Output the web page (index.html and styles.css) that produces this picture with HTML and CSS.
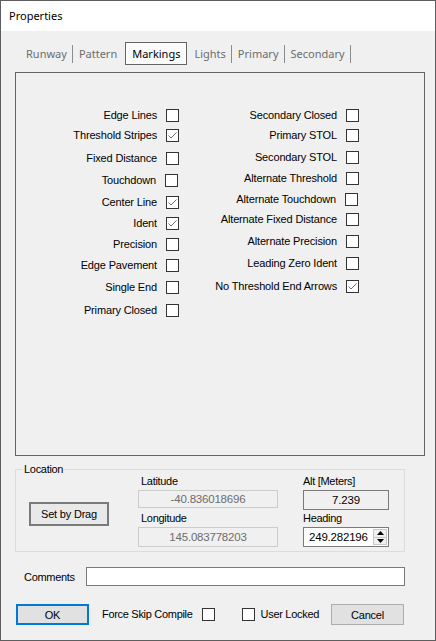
FILE: index.html
```html
<!DOCTYPE html>
<html>
<head>
<meta charset="utf-8">
<link rel="stylesheet" href="styles.css">
</head>
<body>
<div class="window">
  <div class="titlebar">Properties</div>
  <div class="content">
    <div class="tabs">
      <span class="tab">Runway</span><span class="sep"></span>
      <span class="tab">Pattern</span>
      <span class="tab selected">Markings</span>
      <span class="tab">Lights</span><span class="sep"></span>
      <span class="tab">Primary</span><span class="sep"></span>
      <span class="tab">Secondary</span><span class="sep"></span>
    </div>

    <div class="panel">
      <div class="col col-left">
        <div class="row"><span class="lbl">Edge Lines</span><span class="cb"></span></div>
        <div class="row"><span class="lbl">Threshold Stripes</span><span class="cb"><svg viewBox="0 0 11 11" width="11" height="11"><polyline points="1.5,5.5 4,8 9.5,2.5" fill="none" stroke="#6f6f6f" stroke-width="1"/></svg></span></div>
        <div class="row"><span class="lbl">Fixed Distance</span><span class="cb"></span></div>
        <div class="row nudge"><span class="lbl">Touchdown</span><span class="cb"></span></div>
        <div class="row"><span class="lbl">Center Line</span><span class="cb"><svg viewBox="0 0 11 11" width="11" height="11"><polyline points="1.5,5.5 4,8 9.5,2.5" fill="none" stroke="#6f6f6f" stroke-width="1"/></svg></span></div>
        <div class="row"><span class="lbl">Ident</span><span class="cb"><svg viewBox="0 0 11 11" width="11" height="11"><polyline points="1.5,5.5 4,8 9.5,2.5" fill="none" stroke="#6f6f6f" stroke-width="1"/></svg></span></div>
        <div class="row"><span class="lbl">Precision</span><span class="cb"></span></div>
        <div class="row"><span class="lbl">Edge Pavement</span><span class="cb"></span></div>
        <div class="row"><span class="lbl">Single End</span><span class="cb"></span></div>
        <div class="row"><span class="lbl">Primary Closed</span><span class="cb"></span></div>
      </div>
      <div class="col col-right">
        <div class="row"><span class="lbl">Secondary Closed</span><span class="cb"></span></div>
        <div class="row"><span class="lbl">Primary STOL</span><span class="cb"></span></div>
        <div class="row"><span class="lbl">Secondary STOL</span><span class="cb"></span></div>
        <div class="row"><span class="lbl">Alternate Threshold</span><span class="cb"></span></div>
        <div class="row nudge"><span class="lbl">Alternate Touchdown</span><span class="cb"></span></div>
        <div class="row"><span class="lbl">Alternate Fixed Distance</span><span class="cb"></span></div>
        <div class="row"><span class="lbl">Alternate Precision</span><span class="cb"></span></div>
        <div class="row"><span class="lbl">Leading Zero Ident</span><span class="cb"></span></div>
        <div class="row"><span class="lbl">No Threshold End Arrows</span><span class="cb"><svg viewBox="0 0 11 11" width="11" height="11"><polyline points="1.5,5.5 4,8 9.5,2.5" fill="none" stroke="#6f6f6f" stroke-width="1"/></svg></span></div>
      </div>
    </div>

    <div class="location">
      <span class="loc-title">Location</span>
      <div class="btn drag-btn">Set by Drag</div>
      <div class="field-col latlon">
        <span class="flabel">Latitude</span>
        <div class="input disabled short">-40.836018696</div>
        <span class="flabel second">Longitude</span>
        <div class="input disabled">145.083778203</div>
      </div>
      <div class="field-col altcol">
        <span class="flabel">Alt [Meters]</span>
        <div class="input readonly">7.239</div>
        <span class="flabel second-b">Heading</span>
        <div class="input spin">
          <span class="spin-val">249.282196</span>
          <span class="spinner">
            <span class="spin-btn"><svg viewBox="0 0 7 4" width="7" height="4"><polygon points="0,4 7,4 3.5,0" fill="#000"/></svg></span>
            <span class="spin-btn"><svg viewBox="0 0 7 4" width="7" height="4"><polygon points="0,0 7,0 3.5,4" fill="#000"/></svg></span>
          </span>
        </div>
      </div>
    </div>

    <div class="comments-row">
      <span class="clabel">Comments</span>
      <div class="input comments"></div>
    </div>

    <div class="buttons-row">
      <div class="btn ok">OK</div>
      <span class="blabel force">Force Skip Compile</span>
      <span class="cb"></span>
      <span class="cb locked"></span>
      <span class="blabel user">User Locked</span>
      <div class="btn cancel">Cancel</div>
    </div>
  </div>
</div>
</body>
</html>
```

FILE: styles.css
```css
html, body {
  margin: 0;
  padding: 0;
  background: #f0f0f0;
}

.window {
  width: 436px;
  height: 641px;
  box-sizing: border-box;
  border: 1px solid #5e5e5e;
  background: #f0f0f0;
  font-family: "Liberation Sans", Arial, sans-serif;
  font-size: 11px;
  color: #000;
  overflow: hidden;
}

.titlebar {
  height: 30px;
  background: #fff;
  font-family: "Noto Sans", "Open Sans", sans-serif;
  font-size: 11px;
  line-height: 30px;
  padding-left: 8px;
  color: #000;
}

.content {
  padding-left: 14px;
}

/* tabs */
.tabs {
  display: flex;
  align-items: center;
  height: 23px;
  margin-top: 11px;
  padding-left: 5px;
  font-family: "Noto Sans", "Open Sans", sans-serif;
  font-size: 11px;
  color: #6d6d6d;
}

.tab {
  padding: 0 5px 0 6px;
  line-height: 21px;
}

.tab.selected {
  color: #000;
  background: #fbfbfb;
  border: 1px solid #646464;
  padding: 0 6px;
  margin: 0 1px 0 3px;
}

.sep {
  width: 1px;
  height: 18px;
  background: #8c8c8c;
}

/* main panel */
.panel {
  margin-top: 7px;
  width: 410px;
  height: 384px;
  box-sizing: border-box;
  border: 1px solid #646464;
  display: flex;
  padding-top: 36px;
}

.col {
  display: grid;
  align-content: start;
}

.col-left {
  width: 163px;
  grid-template-rows: 20px 23px 22px 22px 21px 21px 21px 22px 23px 13px;
}

.col-right {
  width: 180px;
  grid-template-rows: 20px 22px 21px 21px 20px 22px 22px 23px 13px;
}

.row {
  display: flex;
  justify-content: flex-end;
  align-items: center;
  gap: 9px;
  height: 13px;
}

.row.nudge {
  margin-right: 1px;
}

.lbl, .flabel, .clabel, .blabel, .loc-title {
  font-family: "Liberation Sans", Arial, sans-serif;
  font-size: 11px;
  letter-spacing: -0.3px;
  line-height: 13px;
  white-space: nowrap;
}

.lbl {
  letter-spacing: -0.15px;
}

.cb {
  width: 13px;
  height: 13px;
  box-sizing: border-box;
  border: 1px solid #333;
  background: #fff;
  display: flex;
  align-items: center;
  justify-content: center;
  flex: none;
}

.cb svg {
  display: block;
}

/* location group */
.location {
  position: relative;
  margin-top: 13px;
  width: 390px;
  height: 83px;
  box-sizing: border-box;
  border: 1px solid #dcdcdc;
  display: flex;
  align-items: flex-start;
  padding-left: 13px;
}

.loc-title {
  position: absolute;
  left: 7px;
  top: -7px;
  padding: 0 1px;
  background: #f0f0f0;
}

.btn {
  box-sizing: border-box;
  display: flex;
  align-items: center;
  justify-content: center;
  font-family: "Liberation Sans", Arial, sans-serif;
  font-size: 11px;
  letter-spacing: -0.2px;
  background: #e1e1e1;
}

.drag-btn {
  width: 80px;
  height: 24px;
  margin-top: 32px;
  border: 2px solid #7a7a7a;
  background: #e9e9e9;
}

.field-col {
  display: flex;
  flex-direction: column;
  padding-top: 5px;
}

.latlon {
  width: 140px;
  margin-left: 29px;
}

.altcol {
  width: 86px;
  margin-left: 25px;
}

.flabel {
  padding-left: 3px;
}

.altcol .flabel {
  padding-left: 0;
}

.input {
  box-sizing: border-box;
  height: 20px;
  display: flex;
  align-items: center;
  justify-content: center;
  font-family: "Liberation Sans", Arial, sans-serif;
  font-size: 11.5px;
  letter-spacing: -0.2px;
}

.latlon .input {
  margin-top: 2px;
}

.input.short {
  height: 18px;
}

.flabel.second {
  margin-top: 4px;
}

.altcol .input {
  margin-top: 2px;
}

.flabel.second-b {
  margin-top: 2px;
}

.input.disabled {
  background: #f0f0f0;
  border: 1px solid #cccccc;
  color: #6d6d6d;
}

.input.readonly {
  background: #f0f0f0;
  border: 1px solid #7a7a7a;
  color: #000;
}

.input.spin {
  background: #fff;
  border: 1px solid #7a7a7a;
  justify-content: space-between;
  padding-left: 5px;
  padding-right: 1px;
}

.spinner {
  display: flex;
  flex-direction: column;
  width: 14px;
  height: 16px;
  border: 1px solid #c8c8c8;
  box-sizing: border-box;
}

.spin-btn {
  flex: 1;
  display: flex;
  align-items: center;
  justify-content: center;
  background: #f0f0f0;
}

.spin-btn + .spin-btn {
  border-top: 1px solid #c8c8c8;
}

.spin-btn svg {
  display: block;
}

/* comments */
.comments-row {
  display: flex;
  align-items: center;
  margin-top: 15px;
  width: 390px;
}

.clabel {
  margin-left: 9px;
  width: 62px;
  padding-top: 2px;
}

.input.comments {
  width: 319px;
  height: 19px;
  background: #fff;
  border: 1px solid #7a7a7a;
}

/* bottom buttons */
.buttons-row {
  display: flex;
  align-items: center;
  margin-top: 18px;
  width: 389px;
  height: 21px;
}

.ok {
  width: 73px;
  height: 21px;
  margin-left: 1px;
  border: 2px solid #0078d7;
}

.blabel.force {
  margin-left: 13px;
  margin-right: 9px;
}

.cb.locked {
  margin-left: 27px;
  margin-right: 6px;
}

.cancel {
  margin-left: auto;
  width: 73px;
  height: 21px;
  border: 1px solid #adadad;
}
```
